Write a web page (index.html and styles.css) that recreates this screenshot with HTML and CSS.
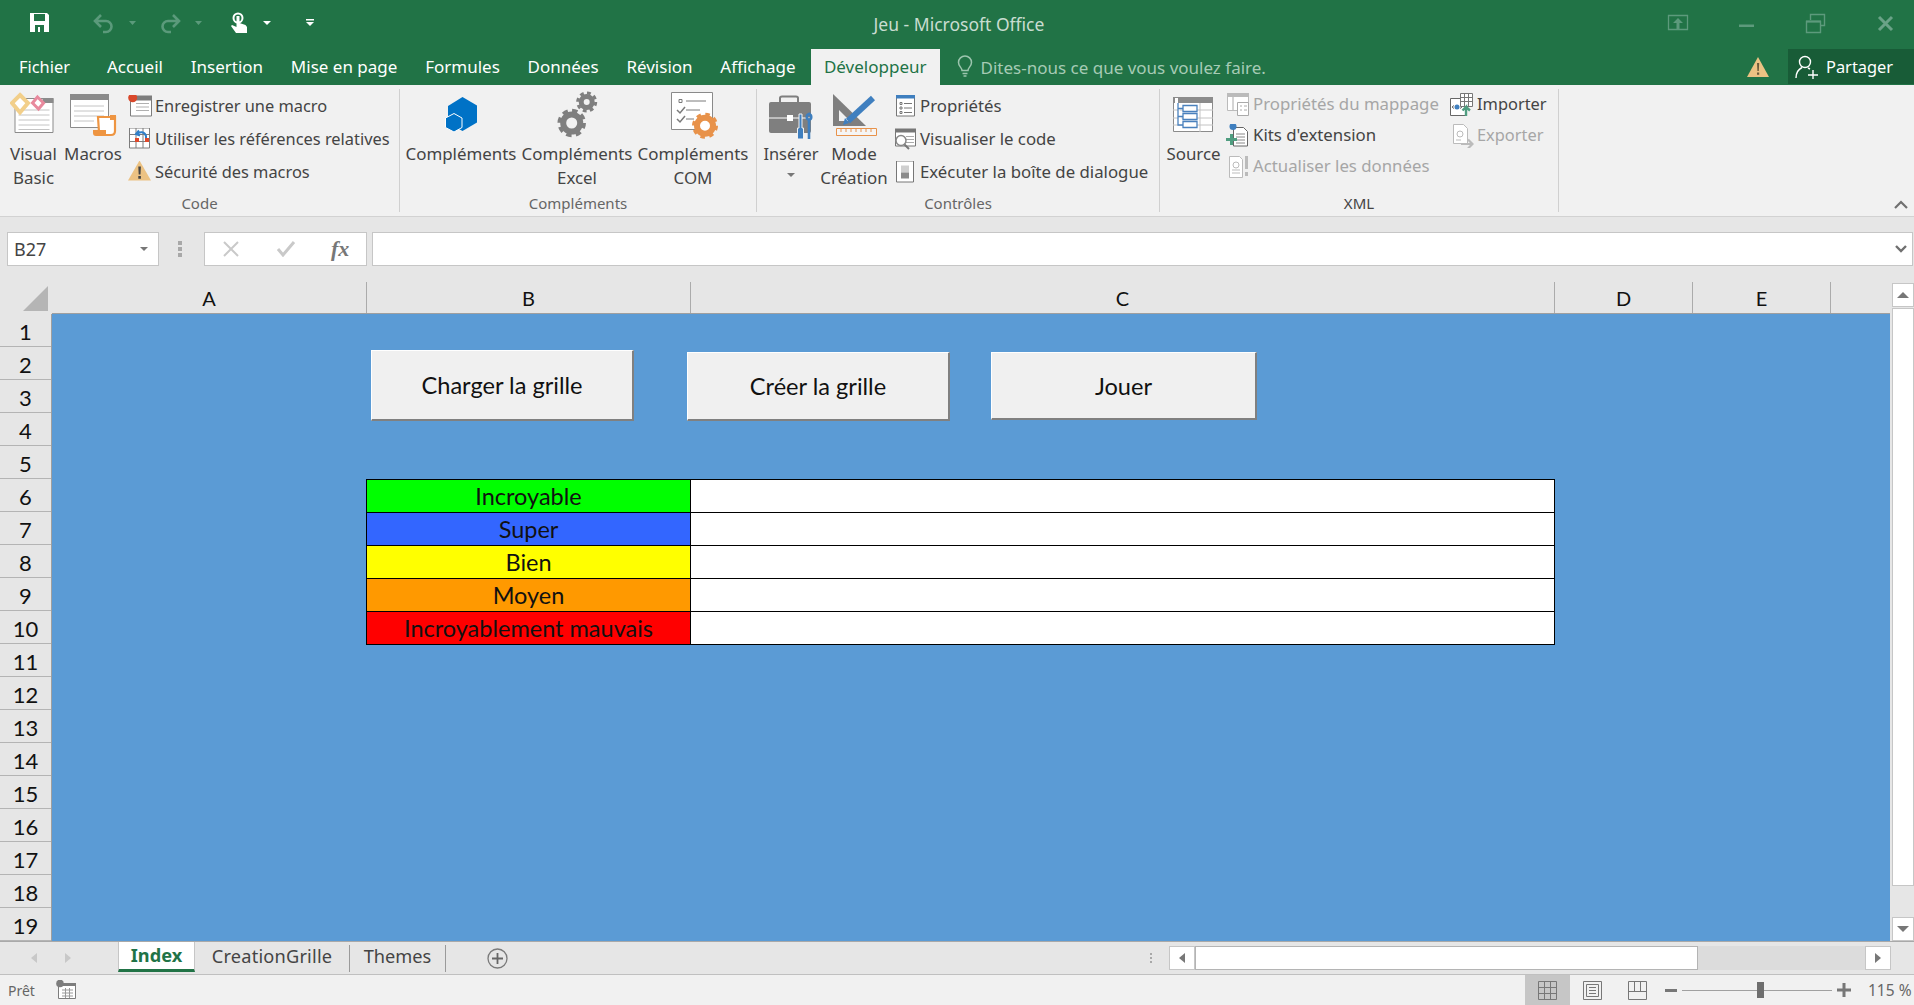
FILE: index.html
```html
<!DOCTYPE html>
<html lang="fr">
<head>
	<meta charset="utf-8">
	<title>Jeu - Microsoft Office</title>
	<link rel="stylesheet" href="styles.css">
</head>
<body>
<div class="app">

	<!-- title bar -->
	<header class="titlebar">
		<div class="qat">
			<svg width="46" height="49" viewBox="24 0 46 49"><path fill="#fff" d="M30 13h17l2 2v17H30z"/><path fill="#217346" d="M34 14h11v7H34zM35 25h9v7H35z"/><path fill="#fff" d="M38 27h2v5h-2z"/></svg>
			<svg width="52" height="49" viewBox="70 0 52 49"><path fill="none" stroke="#5b9a7b" stroke-width="2.600" d="M101 15l-6 6 6 6M95 21h11a5.500 5.500 0 0 1 0 11h-3"/></svg>
			<svg width="23" height="49" viewBox="122 0 23 49"><path fill="#5b9a7b" d="M129 21h7l-3.500 4z"/></svg>
			<svg width="45" height="49" viewBox="145 0 45 49"><path fill="none" stroke="#5b9a7b" stroke-width="2.600" d="M173 15l6 6-6 6M179 21h-11a5.500 5.500 0 0 0 0 11h3"/></svg>
			<svg width="30" height="49" viewBox="190 0 30 49"><path fill="#5b9a7b" d="M195 21h7l-3.500 4z"/></svg>
			<svg width="38" height="49" viewBox="220 0 38 49"><circle cx="238" cy="18" r="4.500" fill="none" stroke="#fff" stroke-width="2"/><path fill="#fff" d="M236.500 16h3v7l6 2 1.500 2v6h-11l-5-7 1-1 4.500 2z"/></svg>
			<svg width="32" height="49" viewBox="258 0 32 49"><path fill="#fff" d="M263 21h8l-4 4z"/></svg>
			<svg width="40" height="49" viewBox="290 0 40 49"><path fill="#fff" d="M306 19h8v1.500h-8zM306 22h8l-4 4z"/></svg>
		</div>
		<div class="doc-title">Jeu - Microsoft Office</div>
		<div class="win-controls">
			<svg width="60" height="49" viewBox="1650 0 60 49"><path fill="none" stroke="#5d9a7c" stroke-width="1.300" d="M1668.500 15.500h19v14h-19z"/><path fill="#5d9a7c" d="M1678 18l5 5h-3.500v6h-3v-6H1673z"/></svg>
			<svg width="70" height="49" viewBox="1710 0 70 49"><path fill="#5d9a7c" d="M1739 24.500h15v2.500h-15z"/></svg>
			<svg width="70" height="49" viewBox="1780 0 70 49"><path fill="none" stroke="#5d9a7c" stroke-width="1.400" d="M1806.500 21.500h14v11h-14zM1810.500 20v-5.500h14v11h-4"/><path fill="#5d9a7c" d="M1806 20.500h15v2h-15z"/></svg>
			<svg width="64" height="49" viewBox="1850 0 64 49"><path fill="none" stroke="#6aa287" stroke-width="3" d="M1879 17l13 13M1892 17l-13 13"/></svg>
		</div>
	</header>

	<!-- ribbon tabs -->
	<nav class="tabbar">
		<a class="tab tab-file">Fichier</a>
		<a class="tab">Accueil</a>
		<a class="tab">Insertion</a>
		<a class="tab">Mise en page</a>
		<a class="tab">Formules</a>
		<a class="tab">Données</a>
		<a class="tab">Révision</a>
		<a class="tab">Affichage</a>
		<a class="tab tab-active">Développeur</a>
		<div class="tell-me">
			<svg width="16" height="24" viewBox="0 0 16 24"><path fill="none" stroke="#9cc5ae" stroke-width="1.500" d="M5 15.500c0-3-3.500-4-3.500-8a6.500 6.500 0 0 1 13 0c0 4-3.500 5-3.500 8zM5.500 18.500h5M6.500 21h3"/></svg>
			<span>Dites-nous ce que vous voulez faire.</span>
		</div>
		<svg class="tab-warn" width="24" height="22" viewBox="0 0 24 22"><path fill="#ecc283" d="M12 1l11 20H1z"/><path fill="#6b5a3a" d="M11 7h2.200l-.4 8h-1.400zM11 16.500h2.200v2.300H11z"/></svg>
		<div class="share">
			<svg width="24" height="26" viewBox="0 0 24 26"><circle cx="10" cy="8" r="5.500" fill="none" stroke="#fff" stroke-width="1.400"/><path fill="none" stroke="#fff" stroke-width="1.400" d="M1 24c0-5 3-9 6-10.500M13 14l2 1M13 21h10M18 16v9"/></svg>
			<span>Partager</span>
		</div>
	</nav>

	<!-- ribbon -->
	<section class="ribbon">

		<div class="group group-code">
			<div class="group-body">
				<div class="big big-vb">
					<svg width="48" height="52" viewBox="9.500 89 48 52">
						<path fill="#fff" stroke="#8b8b8b" d="M14.500 98.500h38v34h-38z"/><path fill="#8b8b8b" d="M42 98h11v5H42z"/>
						<path stroke="#c4c4c4" d="M18 110h31M18 115h31M18 120h31M18 125h31M18 129.500h31"/>
						<path fill="#fff" stroke="#f2cf8a" stroke-width="4" d="M19.500 95l8 8-8 9.500-8-9.500z"/>
						<path fill="#fff" stroke="#e8899d" stroke-width="3" d="M37 97l6 6-5 6-6-6z"/>
					</svg>
					<span>Visual<br>Basic</span>
				</div>
				<div class="big big-macros">
					<svg width="48" height="52" viewBox="69 89 48 52">
						<path fill="#fff" stroke="#8b8b8b" d="M70.500 94.500h38v33h-38z"/><path fill="#8b8b8b" d="M70 94h39v6H70z"/>
						<path stroke="#c4c4c4" d="M74 106h30M74 111h30M74 116h30M74 121h20"/>
						<path fill="#fff" stroke="#ee9542" stroke-width="2.200" d="M98 117h17v14c0 3-2 4-4 4H96c2 0 3-1 3-3z"/>
						<path fill="#ee9542" d="M93 130h13v6H96c-2 0-3-1-3-3zM110 115h6v5h-6z"/>
					</svg>
					<span>Macros</span>
				</div>
				<div class="small-col">
					<div class="small">
						<svg width="24" height="24" viewBox="128 94.500 24 24">
							<path fill="#fff" stroke="#7d7d7d" d="M130.500 96.500h21v19h-21z"/><path fill="#7d7d7d" d="M130 95h22v5h-22z"/>
							<path stroke="#b0b0b0" d="M136 103h13M136 106.500h13M136 110h13"/>
							<circle cx="132.700" cy="97.300" r="4.500" fill="#d9482b"/>
						</svg>
						<span>Enregistrer une macro</span>
					</div>
					<div class="small">
						<svg width="24" height="24" viewBox="128 127.500 24 24">
							<path fill="#fff" stroke="#7d7d7d" d="M129.500 127.500h20v20h-20zM136 127.500v20M143 127.500v20M129.500 134h20M129.500 141h20"/>
							<path fill="#e0492b" d="M135 137.500h4v4h-4zM145 137.500h4v4h-4z"/>
							<path fill="none" stroke="#2f7fc8" stroke-width="2" d="M137 134a5 5 0 0 1 9 1.500v2M139 130l-3 3.500 4 1.500"/>
						</svg>
						<span>Utiliser les références relatives</span>
					</div>
					<div class="small">
						<svg width="24" height="24" viewBox="128 160.500 24 24">
							<path fill="#ecc283" d="M139.500 160l11.500 20h-23z"/><path fill="#444" d="M138.300 166h2.600l-.4 8h-1.800zM138.300 175.500h2.600v2.700h-2.600z"/>
						</svg>
						<span>Sécurité des macros</span>
					</div>
				</div>
			</div>
			<div class="group-label">Code</div>
		</div>

		<div class="group group-addins">
			<div class="group-body">
				<div class="big big-addin">
					<svg width="114" height="52" viewBox="404 89 114 52">
						<path fill="#0072c6" d="M462.500 97l14.500 8.500v17l-14.500 8.500-14.500-8v-17z"/>
						<path fill="#0072c6" stroke="#fff" d="M454 113.500l8 4.500v9.500l-8 4.500-8.500-4.500V118z"/>
					</svg>
					<span>Compléments</span>
				</div>
				<div class="big big-addin">
					<svg width="114" height="52" viewBox="520 89 114 52">
						<g fill="none" stroke="#7f7f7f">
							<circle cx="571.700" cy="123" r="8.500" stroke-width="6"/>
							<circle cx="571.700" cy="123" r="12.500" stroke-width="3.500" stroke-dasharray="5.500 4.320"/>
							<circle cx="586.700" cy="102" r="5.500" stroke-width="5"/>
							<circle cx="586.700" cy="102" r="9" stroke-width="3" stroke-dasharray="3.800 3.270"/>
						</g>
					</svg>
					<span>Compléments<br>Excel</span>
				</div>
				<div class="big big-addin">
					<svg width="114" height="52" viewBox="636 89 114 52">
						<path fill="#fff" stroke="#8a8a8a" d="M671.500 92.500h41v37h-41z"/>
						<path fill="none" stroke="#7a7a7a" d="M679 99.500h3v3h-3zM686 101h20M686 110h14M686 119h8"/>
						<path fill="none" stroke="#7a7a7a" stroke-width="1.500" d="M677 110l3 3 5-6M677 119l3 3 5-6"/>
						<circle cx="705" cy="125.700" r="8" fill="#fff" stroke="#e8924a" stroke-width="6"/>
						<circle cx="705" cy="125.700" r="11.500" fill="none" stroke="#e8924a" stroke-width="3" stroke-dasharray="4.500 4.530"/>
					</svg>
					<span>Compléments<br>COM</span>
				</div>
			</div>
			<div class="group-label">Compléments</div>
		</div>

		<div class="group group-controls">
			<div class="group-body">
				<div class="big big-insert">
					<svg width="54" height="52" viewBox="764 89 54 52">
						<path fill="none" stroke="#7f7f7f" stroke-width="2" d="M780 102v-4c0-1 1-1.500 2-1.500h14c1 0 2 .5 2 1.500v4"/>
						<path fill="#7f7f7f" d="M771 102h38a2 2 0 0 1 2 2v27a2 2 0 0 1-2 2h-38a2 2 0 0 1-2-2v-27a2 2 0 0 1 2-2z"/>
						<path stroke="#fff" d="M769 118h42"/><path fill="#fff" d="M787 115h6v6h-6z"/>
						<path fill="#3f7fbf" stroke="#f1f1f1" d="M799 114h3v14h1.500v11h-6v-11h1.500z"/>
						<path fill="none" stroke="#3f7fbf" stroke-width="2.600" d="M809 115v-1c-3 1-3 5 0 6v19M809 120c3-1 3-5 0-6"/>
					</svg>
					<span>Insérer</span>
					<svg class="drop" width="8" height="5" viewBox="0 0 8 5"><path fill="#777" d="M0 0h8L4 4z"/></svg>
				</div>
				<div class="big big-mode">
					<svg width="68" height="52" viewBox="820 89 68 52">
						<path fill="#7f7f7f" d="M833 94l33 32h-33z"/><path fill="#f1f1f1" d="M839 110l11 11h-11z"/>
						<path fill="none" stroke="#3f7fbf" stroke-width="6" d="M873 98l-25 23"/><path fill="#3f7fbf" d="M845 118l4 5-6 2z"/>
						<path fill="#f5f5f5" stroke="#e8924a" d="M836.500 128.500h40v7h-40z"/>
						<path stroke="#e8924a" d="M841 129v3M846 129v3M851 129v3M856 129v3M861 129v3M866 129v3M871 129v3"/>
					</svg>
					<span>Mode<br>Création</span>
				</div>
				<div class="small-col small-col-controls">
					<div class="small">
						<svg width="24" height="24" viewBox="893 94.500 24 24">
							<path fill="#fff" stroke="#777" d="M896.500 94.500h18v21h-18z"/><path fill="#3f7fbf" d="M896 94h19v4h-19z"/>
							<path fill="none" stroke="#777" d="M900 102h2v2h-2zM900 106.500h2v2h-2zM900 111h2v2h-2zM904 103h8M904 107.500h8M904 112h8"/>
						</svg>
						<span>Propriétés</span>
					</div>
					<div class="small">
						<svg width="24" height="24" viewBox="893 127.500 24 24">
							<path fill="#fff" stroke="#777" d="M895.500 130.500h20v15h-20z"/><path fill="#777" d="M895 128h21v4h-21z"/>
							<path stroke="#aaa" d="M906 136h8M906 139h8M906 142h8"/>
							<circle cx="901" cy="140" r="5" fill="#fff" stroke="#888" stroke-width="1.500"/><path stroke="#777" stroke-width="2" d="M904.500 144l4.500 4.500"/>
						</svg>
						<span>Visualiser le code</span>
					</div>
					<div class="small">
						<svg width="24" height="24" viewBox="893 160.500 24 24">
							<path fill="#fff" stroke="#777" d="M896.500 160.500h17v21h-17z"/>
							<path fill="#cfcfcf" d="M901 165h8v7h-8z"/><path fill="#8b8b8b" d="M901 172h8v6h-8z"/>
						</svg>
						<span>Exécuter la boîte de dialogue</span>
					</div>
				</div>
			</div>
			<div class="group-label">Contrôles</div>
		</div>

		<div class="group group-xml">
			<div class="group-body">
				<div class="big big-source">
					<svg width="57" height="52" viewBox="1165 89 57 52">
						<path fill="#fff" stroke="#8b8b8b" d="M1173.500 97.500h39v34h-39z"/><path fill="#8b8b8b" d="M1178 97h35v6h-35zM1173 97h2v6h-2z"/>
						<path stroke="#c4c4c4" d="M1173 110h40M1173 118h40M1173 125h40M1200 103v29"/>
						<path fill="#fff" stroke="#4a81bd" stroke-width="1.300" d="M1183 105.500h14v6h-14zM1183 113.500h14v6h-14zM1183 121.500h14v6h-14zM1178 103v22h5M1178 108.500h5M1178 116.500h5"/>
					</svg>
					<span>Source</span>
				</div>
				<div class="small-col small-col-xml">
					<div class="small small-xml small-off">
						<svg width="24" height="24" viewBox="1225 93 24 24">
							<path fill="#fff" stroke="#bbb" d="M1227.500 93.500h21v17h-21z"/><path fill="#bbb" d="M1227 93h22v4h-22z"/>
							<path fill="#fff" stroke="#aaa" d="M1237.500 102.500h11v13h-11z"/><path stroke="#aaa" d="M1240 106h2M1244 106h3M1240 110h2M1244 110h3M1233 97v13"/>
						</svg>
						<span>Propriétés du mappage</span>
					</div>
					<div class="small small-xml">
						<svg width="24" height="24" viewBox="1225 123 24 24">
							<path fill="#fff" stroke="#666" d="M1233.500 126.500h10l4 4v14.500h-14z"/><path stroke="#888" d="M1236 133h9M1236 136h9M1236 139h9M1236 142h9"/>
							<circle cx="1233" cy="125.500" r="3.500" fill="#3f7fbf"/>
							<path fill="#4f9d80" d="M1230 133h3v4h4v3h-4v4h-3v-4h-4v-3h4z"/>
						</svg>
						<span>Kits d'extension</span>
					</div>
					<div class="small small-xml small-off">
						<svg width="24" height="24" viewBox="1225 154 24 24">
							<path fill="#fff" stroke="#bbb" d="M1229.500 155.500h10l3 3v18h-13z"/><path fill="none" stroke="#bbb" d="M1232 169h8M1232 172h8"/><circle cx="1236" cy="164" r="3" fill="none" stroke="#bbb"/>
							<path fill="#bbb" d="M1245 155h3v13h-3zM1245 171h3v4h-3z"/>
						</svg>
						<span>Actualiser les données</span>
					</div>
				</div>
				<div class="small-col small-col-xml2">
					<div class="small small-xml">
						<svg width="24" height="24" viewBox="1450 92 24 24">
							<path fill="#fff" stroke="#666" d="M1450.500 97.500h13l3 3v14h-16z"/><circle cx="1457" cy="106" r="2.500" fill="#3f7fbf"/><path fill="none" stroke="#666" d="M1452 106l2-1.500M1452 106l2 1.500M1462 106l-2-1.500M1462 106l-2 1.500"/>
							<path fill="#fff" stroke="#777" d="M1460.500 92.500h12v13h-12zM1464.500 92.500v13M1468.500 92.500v13M1460.500 96.500h12M1460.500 100.500h12"/>
							<path fill="none" stroke="#4f9d80" stroke-width="2.400" d="M1466 115v-9l-3.500 3.500M1466 106l4 3.500"/>
						</svg>
						<span>Importer</span>
					</div>
					<div class="small small-xml small-off">
						<svg width="24" height="24" viewBox="1450 123 24 24">
							<path fill="#fff" stroke="#bbb" d="M1453.500 123.500h10l4 4v15h-14z"/><circle cx="1460" cy="133" r="3" fill="none" stroke="#bbb"/><path stroke="#bbb" d="M1456 139h5"/>
							<path fill="none" stroke="#bbb" stroke-width="2.200" d="M1461 143h11M1468 138.500l4.500 4.500-4.500 4.500"/>
						</svg>
						<span>Exporter</span>
					</div>
				</div>
			</div>
			<div class="group-label group-label-xml">XML</div>
		</div>

		<svg class="collapse" width="14" height="9" viewBox="0 0 14 9"><path fill="none" stroke="#707070" stroke-width="2.200" d="M1 8l6-6 6 6"/></svg>
	</section>

	<!-- name box and formula input -->
	<section class="formula-bar">
		<div class="name-box">
			<span>B27</span>
			<svg width="8" height="5" viewBox="0 0 8 5"><path fill="#777" d="M0 0h8L4 4z"/></svg>
		</div>
		<div class="grip"><i></i><i></i><i></i></div>
		<div class="fx-box">
			<svg width="16" height="16" viewBox="0 0 16 16"><path fill="none" stroke="#c9c9c9" stroke-width="2" d="M1 1l14 14M15 1L1 15"/></svg>
			<svg width="20" height="16" viewBox="0 0 20 16"><path fill="none" stroke="#c9c9c9" stroke-width="3" d="M2 8l5 6L18 1"/></svg>
			<span class="fx">fx</span>
		</div>
		<div class="formula-input">
			<svg width="12" height="8" viewBox="0 0 12 8"><path fill="none" stroke="#707070" stroke-width="2.400" d="M1 1l5 5 5-5"/></svg>
		</div>
	</section>

	<!-- worksheet -->
	<section class="sheet">
		<div class="corner"><svg width="25" height="25" viewBox="0 0 25 25"><path fill="#b5b5b5" d="M25 0v25H0z"/></svg></div>
		<div class="col-heads">
			<div class="col col-a">A</div>
			<div class="col col-b">B</div>
			<div class="col col-c">C</div>
			<div class="col col-d">D</div>
			<div class="col col-e">E</div>
		</div>
		<div class="vscroll">
			<div class="scroll-btn scroll-up"><svg width="12" height="6" viewBox="0 0 12 6"><path fill="#777" d="M6 0l6 6H0z"/></svg></div>
			<div class="scroll-thumb"></div>
			<div class="scroll-btn scroll-down"><svg width="12" height="6" viewBox="0 0 12 6"><path fill="#777" d="M0 0h12L6 6z"/></svg></div>
		</div>
		<div class="row-heads">
			<div>1</div><div>2</div><div>3</div><div>4</div><div>5</div>
			<div>6</div><div>7</div><div>8</div><div>9</div><div>10</div>
			<div>11</div><div>12</div><div>13</div><div>14</div><div>15</div>
			<div>16</div><div>17</div><div>18</div><div>19</div>
		</div>
		<div class="cells">
			<div class="macro-buttons">
				<button class="macro-btn btn-load">Charger la grille</button>
				<button class="macro-btn btn-create">Créer la grille</button>
				<button class="macro-btn btn-play">Jouer</button>
			</div>
			<table class="levels">
				<tr><td class="lvl lvl-green">Incroyable</td><td></td></tr>
				<tr><td class="lvl lvl-blue">Super</td><td></td></tr>
				<tr><td class="lvl lvl-yellow">Bien</td><td></td></tr>
				<tr><td class="lvl lvl-orange">Moyen</td><td></td></tr>
				<tr><td class="lvl lvl-red">Incroyablement mauvais</td><td></td></tr>
			</table>
		</div>
	</section>

	<!-- sheet tabs and horizontal scrollbar -->
	<section class="tabstrip">
		<div class="sheet-nav">
			<svg width="6" height="10" viewBox="0 0 6 10"><path fill="#c8c8c8" d="M6 0v10L0 5z"/></svg>
			<svg width="6" height="10" viewBox="0 0 6 10"><path fill="#c8c8c8" d="M0 0v10l6-5z"/></svg>
		</div>
		<div class="sheet-tab sheet-tab-active">Index</div>
		<div class="sheet-tab sheet-tab-creation">CreationGrille</div>
		<div class="sheet-tab sheet-tab-themes">Themes</div>
		<svg class="add-sheet" width="21" height="21" viewBox="0 0 21 21"><circle cx="10.500" cy="10.500" r="9.500" fill="none" stroke="#7a7a7a" stroke-width="1.300"/><path stroke="#666" stroke-width="1.800" d="M10.500 5v11M5 10.500h11"/></svg>
		<div class="grip grip-small"><i></i><i></i><i></i></div>
		<div class="hscroll">
			<div class="hscroll-btn"><svg width="6" height="10" viewBox="0 0 6 10"><path fill="#777" d="M6 0v10L0 5z"/></svg></div>
			<div class="hscroll-thumb"></div>
			<div class="hscroll-track"></div>
			<div class="hscroll-btn"><svg width="6" height="10" viewBox="0 0 6 10"><path fill="#777" d="M0 0v10l6-5z"/></svg></div>
		</div>
	</section>

	<!-- status bar -->
	<footer class="statusbar">
		<span class="ready">Prêt</span>
		<svg class="macro-state" width="21" height="20" viewBox="0 0 21 20"><path fill="#fff" stroke="#7d7d7d" d="M3.500 4.500h17v14h-17z"/><path fill="#7d7d7d" d="M3 3h18v3H3z"/><path stroke="#999" d="M7 10h11M7 13h11M7 16h11M10.500 8v10M14.500 8v10"/><circle cx="5" cy="3.500" r="3.800" fill="#7d7d7d"/></svg>
		<div class="views">
			<div class="view view-on"><svg width="20" height="19" viewBox="0 0 20 19"><path fill="none" stroke="#777" d="M.5 .5h18v18H.5zM6.500 .5v18M12.500 .5v18M.5 6.500h18M.5 12.500h18"/></svg></div>
			<div class="view"><svg width="20" height="19" viewBox="0 0 20 19"><path fill="none" stroke="#777" d="M.5 .5h18v18H.5zM3.500 3.500h12v12h-12zM6 6.500h7M6 9.500h7M6 12.500h7"/></svg></div>
			<div class="view"><svg width="20" height="19" viewBox="0 0 20 19"><path fill="none" stroke="#777" d="M.5 .5h18v18H.5zM.5 10.500h18M6.500 .5v10M12.500 .5v10"/></svg></div>
		</div>
		<div class="zoom-slider">
			<svg width="12" height="3" viewBox="0 0 12 3"><path fill="#777" d="M0 0h12v3H0z"/></svg>
			<div class="slider-track"><div class="slider-thumb"></div></div>
			<svg width="14" height="14" viewBox="0 0 14 14"><path fill="#777" d="M5.500 0h3v5.500H14v3H8.500V14h-3V8.500H0v-3h5.500z"/></svg>
		</div>
		<span class="zoom-value">115 %</span>
	</footer>

</div>
</body>
</html>
```

FILE: styles.css
```css
/*
	page frame
*/

body {
	margin: 0;
	background-color: #e6e6e6;
	font-family: "Noto Sans", "Open Sans", sans-serif;
	font-size: 16.4px;
	color: #444;
}

svg {
	display: block;
	flex: none;
}

.app {
	width: 1914px;
	height: 1005px;
	display: flex;
	flex-direction: column;
	overflow: hidden;
}

/*
	title bar
*/

.titlebar {
	height: 49px;
	display: grid;
	grid-template-columns: 1fr auto 1fr;
	align-items: center;
	background-color: #217346;
}

.qat,
.win-controls {
	display: flex;
}

.qat {
	padding-left: 24px;
}

.win-controls {
	justify-content: flex-end;
}

.doc-title {
	margin: 0 0 2px 4px;
	color: #c9ddd1;
	font-size: 17.5px;
}

/*
	ribbon tabs
*/

.tabbar {
	height: 36px;
	display: flex;
	background-color: #217346;
	color: #fff;
}

.tab {
	padding: 0 13.9px;
	line-height: 35px;
	font-size: 17px;
}

.tab-file {
	padding: 0 23px 0 19px;
	font-size: 16.4px;
}

.tab-active {
	margin-left: 1.5px;
	padding: 0 13px;
	background-color: #f1f1f1;
	color: #217346;
}

.tell-me {
	display: flex;
	align-items: center;
	gap: 8px;
	margin-left: 17px;
	font-size: 17px;
	color: #a6cbb5;
}

.tab-warn {
	margin: 7px 18px 0 auto;
}

.share {
	width: 126px;
	height: 35px;
	display: flex;
	align-items: center;
	gap: 7px;
	padding-left: 7px;
	box-sizing: border-box;
	background-color: #185c37;
}

/*
	ribbon
*/

.ribbon {
	height: 132px;
	display: flex;
	padding-top: 4px;
	box-sizing: border-box;
	position: relative;
	background-color: #f1f1f1;
	border-bottom: 1px solid #d2d2d2;
}

.group {
	height: 123px;
	display: flex;
	flex-direction: column;
	box-sizing: border-box;
	border-right: 1px solid #d0d0d0;
}

.group-code { width: 400px; }
.group-addins { width: 357px; }
.group-controls { width: 403px; }
.group-xml { width: 399px; }

.group-body {
	height: 107px;
	display: flex;
}

.group-code .group-body { padding-left: 5px; }
.group-addins .group-body { padding-left: 4px; }
.group-controls .group-body { padding-left: 7px; }
.group-xml .group-body { padding-left: 5px; }

.group-label {
	line-height: 18px;
	text-align: center;
	font-size: 15px;
	color: #666;
}

.group-label-xml {
	color: #444;
}

.big {
	display: flex;
	flex-direction: column;
	align-items: center;
	flex: none;
	line-height: 24px;
	font-size: 16.9px;
	text-align: center;
	white-space: nowrap;
}

.big span {
	margin-top: 1px;
}

.big-vb { width: 57px; }
.big-macros { width: 62px; }
.big-addin { width: 114px; margin-right: 2px; }
.big-insert { width: 54px; font-size: 16.4px; }
.big-mode { width: 68px; margin-left: 2px; }
.big-source { width: 57px; }

.drop {
	margin-top: 7px;
}

.small-col {
	margin-left: 4px;
	padding-top: 1px;
}

.small-col-controls {
	margin-left: 5px;
	font-size: 16.8px;
}

.small-col-xml {
	width: 223px;
	margin-left: 3px;
	padding-top: 0;
	font-size: 16.8px;
}

.small-col-xml2 {
	margin-left: 2px;
	padding-top: 0;
}

.small-col-xml2 .small {
	gap: 3px;
}

.small {
	height: 33px;
	display: flex;
	align-items: center;
	gap: 3px;
	white-space: nowrap;
}

.small span {
	margin-bottom: 3px;
}

.small-xml {
	height: 31px;
	gap: 4px;
}

.small-off {
	color: #a6a6a6;
}

.collapse {
	position: absolute;
	right: 6px;
	bottom: 7px;
}

/*
	name box and formula input
*/

.formula-bar {
	height: 65px;
	display: flex;
	align-items: flex-start;
	padding: 15px 1px 0 7px;
	box-sizing: border-box;
}

.name-box,
.fx-box,
.formula-input {
	height: 34px;
	display: flex;
	align-items: center;
	box-sizing: border-box;
	background-color: #fff;
	border: 1px solid #c6c6c6;
}

.name-box {
	width: 152px;
	justify-content: space-between;
	padding: 0 10px 0 6px;
	font-size: 18px;
}

.grip {
	width: 42px;
	height: 34px;
	display: flex;
	flex-direction: column;
	align-items: center;
	justify-content: center;
	gap: 2px;
	flex: none;
}

.grip i {
	width: 4px;
	height: 4px;
	background-color: #a8a8a8;
}

.fx-box {
	width: 163px;
	margin-left: 3px;
	padding-left: 18px;
	gap: 37px;
	flex: none;
}

.fx {
	margin-left: -2px;
	font-family: "Liberation Serif", serif;
	font-style: italic;
	font-weight: bold;
	font-size: 22px;
	color: #777;
}

.formula-input {
	flex: 1;
	margin-left: 5px;
	justify-content: flex-end;
	padding-right: 5px;
}

/*
	worksheet
*/

.sheet {
	height: 659px;
	display: grid;
	grid-template-columns: 52px 1838px 24px;
	grid-template-rows: 32px 627px;
	font-family: "Lato", "Noto Sans", sans-serif;
}

.corner {
	padding: 4px 0 0 23px;
}

.col-heads {
	display: flex;
	box-sizing: border-box;
	border-bottom: 1px solid #9f9f9f;
}

.col {
	line-height: 33px;
	text-align: center;
	font-size: 20px;
	color: #111;
	box-sizing: border-box;
	border-right: 1px solid #ababab;
}

.col-a { width: 315px; }
.col-b { width: 324px; }
.col-c { width: 864px; }
.col-d { width: 138px; }
.col-e { width: 138px; }

.vscroll {
	grid-row: 1 / 3;
	grid-column: 3;
	display: flex;
	flex-direction: column;
	padding: 1px 0 0 2px;
	box-sizing: border-box;
	background-color: #e6e6e6;
}

.scroll-btn {
	height: 24px;
	display: flex;
	align-items: center;
	justify-content: center;
	flex: none;
	box-sizing: border-box;
	background-color: #fff;
	border: 1px solid #c6c6c6;
}

.scroll-thumb {
	height: 578px;
	margin-top: 1px;
	box-sizing: border-box;
	background-color: #fff;
	border: 1px solid #c6c6c6;
}

.scroll-down {
	margin-top: auto;
}

.row-heads {
	border-right: 1px solid #9f9f9f;
}

.row-heads div {
	height: 33px;
	line-height: 35px;
	text-align: center;
	font-size: 22px;
	color: #111;
	box-sizing: border-box;
	border-bottom: 1px solid #b4b4b4;
}

.cells {
	padding: 36px 0 0 314px;
	box-sizing: border-box;
	background-color: #5b9bd5;
}

/*
	macro buttons floating on the sheet
*/

.macro-buttons {
	height: 71px;
	display: flex;
	align-items: flex-end;
	margin-left: 5px;
}

.macro-btn {
	padding: 0;
	font: 23.6px "Lato", "Noto Sans", sans-serif;
	color: #111;
	background-color: #f0f0f0;
	border-style: solid;
	border-width: 1px 2px 2px 1px;
	border-color: #fff #808080 #808080 #fff;
}

.btn-load { width: 263px; height: 71px; }
.btn-create { width: 263px; height: 69px; margin-left: 53px; }
.btn-play { width: 266px; height: 68px; margin: 0 0 1px 41px; }

/*
	legend table
*/

.levels {
	margin-top: 58px;
	width: 1189px;
	border-collapse: collapse;
	table-layout: fixed;
	background-color: #fff;
}

.levels td {
	height: 33px;
	padding: 0;
	box-sizing: border-box;
	border: 1px solid #000;
	line-height: 30px;
	text-align: center;
	font-size: 23.5px;
	color: #111;
}

.lvl { width: 324px; }
.lvl-green { background-color: #00ff00; }
.lvl-blue { background-color: #3366ff; }
.lvl-yellow { background-color: #ffff00; }
.lvl-orange { background-color: #ff9900; }
.lvl-red { background-color: #ff0000; }

/*
	sheet tabs and horizontal scrollbar
*/

.tabstrip {
	height: 34px;
	display: flex;
	box-sizing: border-box;
	border-top: 1px solid #a9a9a9;
	border-bottom: 1px solid #c0c0c0;
}

.sheet-nav {
	width: 118px;
	display: flex;
	align-items: center;
	gap: 28px;
	padding-left: 31px;
	box-sizing: border-box;
	flex: none;
}

.sheet-tab {
	margin-top: 3px;
	height: 27px;
	line-height: 23px;
	text-align: center;
	font-size: 18.2px;
	flex: none;
	box-sizing: border-box;
}

.sheet-tab-active {
	width: 77px;
	height: 30px;
	margin-top: 0;
	line-height: 27px;
	font-weight: bold;
	color: #217346;
	background-color: #fff;
	border-bottom: 3px solid #217346;
	border-left: 1px solid #c6c6c6;
	border-right: 1px solid #c6c6c6;
}

.sheet-tab-creation {
	width: 155px;
	letter-spacing: .2px;
	border-right: 1px solid #9a9a9a;
}

.sheet-tab-themes {
	width: 96px;
	border-right: 1px solid #9a9a9a;
}

.add-sheet {
	margin: 6px 0 0 41px;
}

.grip-small {
	width: 16px;
	height: 32px;
	margin-left: 635px;
}

.grip-small i {
	width: 2px;
	height: 2px;
}

.hscroll {
	width: 722px;
	height: 24px;
	margin: 4px 0 0 10px;
	display: flex;
	flex: none;
	background-color: #dcdcdc;
}

.hscroll-btn {
	width: 26px;
	display: flex;
	align-items: center;
	justify-content: center;
	flex: none;
	box-sizing: border-box;
	background-color: #fff;
	border: 1px solid #c6c6c6;
}

.hscroll-thumb {
	width: 503px;
	box-sizing: border-box;
	background-color: #fff;
	border: 1px solid #b4b4b4;
}

.hscroll-track {
	flex: 1;
}

/*
	status bar
*/

.statusbar {
	flex: 1;
	display: flex;
	align-items: center;
	background-color: #f1f1f1;
	color: #666;
	font-size: 14px;
}

.ready {
	width: 55px;
	padding-left: 8px;
	box-sizing: border-box;
}

.views {
	align-self: stretch;
	display: flex;
	margin-left: 1449px;
}

.view {
	width: 45px;
	display: flex;
	align-items: center;
	justify-content: center;
}

.view-on {
	background-color: #c6c6c6;
}

.zoom-slider {
	display: flex;
	align-items: center;
	gap: 5px;
	margin-left: 5px;
}

.slider-track {
	width: 150px;
	height: 1px;
	display: flex;
	align-items: center;
	padding-left: 75px;
	box-sizing: border-box;
	background-color: #a0a0a0;
}

.slider-thumb {
	width: 7px;
	height: 16px;
	background-color: #6e6e6e;
}

.zoom-value {
	margin-left: 17px;
	font-size: 15.5px;
	white-space: nowrap;
}
```
